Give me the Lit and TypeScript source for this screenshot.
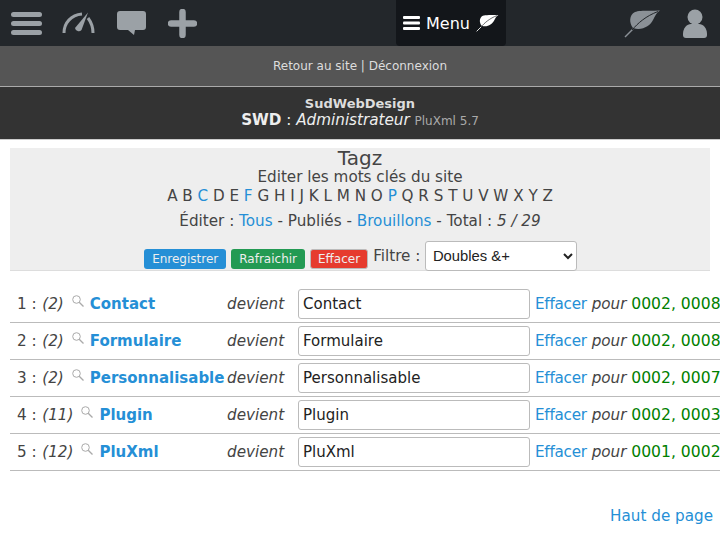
import { LitElement, html, css, svg } from "lit";
import { customElement } from "lit/decorators.js";

const leaf = (fill: string, vein: string) => svg`<path d="M1 28 L9 20" stroke="${fill}" stroke-width="1.4" fill="none"/><path d="M9 19 C5 14 5 6 11 3 C15 1 25 2 36 1.5 C33 3 31 7 29 11 C26 17 18 22 9 19Z" fill="${fill}"/><path d="M8 21 C14 14 22 7 34 2.5" stroke="${vein}" stroke-width="1" fill="none"/>`;

const rows = [
  { n: 1, c: 2, name: "Contact", ids: "0002, 0008" },
  { n: 2, c: 2, name: "Formulaire", ids: "0002, 0008" },
  { n: 3, c: 2, name: "Personnalisable", ids: "0002, 0007" },
  { n: 4, c: 11, name: "Plugin", ids: "0002, 0003" },
  { n: 5, c: 12, name: "PluXml", ids: "0001, 0002" },
];
const letters = "ABCDEFGHIJKLMNOPQRSTUVWXYZ".split("");
const linked = new Set(["C", "F", "P"]);

@customElement("app-root")
export class AppRoot extends LitElement {
  static styles = css`
    :host {
      display: block;
      width: 720px;
      height: 535px;
      overflow: hidden;
      position: relative;
      background: #fff;
      font-family: "DejaVu Sans", sans-serif;
      font-size: 15.2px;
      color: #444;
    }
    a { color: #258fd6; text-decoration: none; }
    .nav {
      height: 46px;
      background: #23272b;
      display: flex;
      align-items: stretch;
    }
    .nav-left { width: 396px; display: flex; align-items: center; }
    .nav-right { flex: 1; display: flex; align-items: center; justify-content: flex-end; }
    .nav svg { display: block; flex-shrink: 0; }
    .ic-bars { margin-left: 11px; }
    .ic-gauge { margin-left: 20px; }
    .ic-chat { margin-left: 22px; }
    .ic-plus { margin-left: 22px; }
    .menu {
      width: 110px;
      box-sizing: border-box;
      background: #13161a;
      border-radius: 0 0 4px 4px;
      display: flex;
      align-items: center;
      justify-content: center;
      gap: 6px;
      color: #fff;
      font-size: 16px;
    }
    .ic-leaf { margin-right: 22px; }
    .ic-user { margin-right: 13px; }
    .sub {
      height: 41px;
      box-sizing: border-box;
      background: #555;
      border-bottom: 1px solid #aaa;
      display: flex;
      align-items: center;
      justify-content: center;
      font-size: 12px;
      color: #ddd;
    }
    .brand {
      height: 53px;
      box-sizing: border-box;
      padding-bottom: 2px;
      background: #333;
      border-bottom: 1px solid #ccc;
      display: flex;
      flex-direction: column;
      align-items: center;
      justify-content: center;
      color: #eee;
      line-height: 17px;
    }
    .brand b.t { font-size: 13px; color: #ddd; }
    .brand small { font-size: 12px; color: #aaa; }
    .panel {
      margin: 8px 10px 0;
      height: 123px;
      background: #eee;
      border-bottom: 1px solid #ddd;
      text-align: center;
      box-sizing: border-box;
    }
    .title { font-size: 20px; line-height: 20px; color: #444; }
    .line { line-height: 19px; }
    .letters { display: flex; justify-content: center; gap: 4.8px; line-height: 19px; }
    .stats { line-height: 20px; margin-top: 5px; }
    .actions {
      margin-top: 10px;
      padding-left: 1px;
      display: flex;
      justify-content: center;
      align-items: center;
      height: 30px;
    }
    .btn {
      font-size: 12px;
      height: 20px;
      line-height: 20px;
      color: #eee;
      padding: 0 8px;
      border-radius: 3px;
      margin-right: 5px;
      box-sizing: border-box;
      margin-top: 6px;
    }
    .blue { background: #258fd6; }
    .green { background: #239a53; }
    .red { background: #e63b2e; border: 1px solid #bbb; line-height: 18px; padding: 0 7px; }
    .flt { margin: 0 4.5px 0 0; }
    select {
      width: 152px;
      height: 30px;
      font: 14.8px "Liberation Sans", sans-serif;
      border: 1px solid #bbb;
      border-radius: 3px;
      background: #fff;
      color: #222;
      padding: 0 3px;
    }
    .table { margin: 15px 0 0 10px; width: 720px; }
    .row {
      display: grid;
      grid-template-columns: 217px 71px 237px auto;
      height: 37px;
      align-items: center;
      border-bottom: 1px solid #bbb;
      box-sizing: border-box;
      white-space: nowrap;
    }
    .cell-a { padding-left: 7px; display: flex; align-items: center; }
    .count { font-style: italic; margin-left: 5.6px; }
    .mag { margin: -6px 6px 0 8px; display: block; flex-shrink: 0; }
    .name { font-weight: 700; color: #258fd6; font-size: 15px; }
    .dev { font-style: italic; }
    input {
      width: 232px;
      height: 30px;
      box-sizing: border-box;
      border: 1px solid #bbb;
      border-radius: 3px;
      padding: 0 4px;
      font: 15px "DejaVu Sans", sans-serif;
      color: #222;
      background: #fff;
      display: block;
    }
    .eff { letter-spacing: -0.25px; }
    .ids { color: #008000; font-size: 15.6px; }
    .top { display: flex; justify-content: flex-end; margin: 36px 7px 0 0; }
  `;

  render() {
    return html`
      <div class="nav">
        <div class="nav-left">
          <svg class="ic-bars" width="31" height="25" viewBox="0 0 31 25"><g fill="#9ba1a6"><rect y="1" width="31" height="5" rx="2.5"/><rect y="10" width="31" height="5" rx="2.5"/><rect y="19" width="31" height="5" rx="2.5"/></g></svg>
          <svg class="ic-gauge" width="33" height="22" viewBox="0 0 33 22"><path d="M2 21 C2 11 9 3 20 2" stroke="#9ba1a6" stroke-width="3" fill="none"/><path d="M26 6 C29 10 31 15 31 21" stroke="#9ba1a6" stroke-width="3" fill="none"/><path d="M26 0.5 L19.5 18 A3.8 3.8 0 0 1 13 16 Z" fill="#9ba1a6"/></svg>
          <svg class="ic-chat" width="29" height="25" viewBox="0 0 29 25"><path d="M3 0 H26 A3 3 0 0 1 29 3 V16 A3 3 0 0 1 26 19 H18 L17 24 L11 19 H3 A3 3 0 0 1 0 16 V3 A3 3 0 0 1 3 0Z" fill="#9ba1a6"/></svg>
          <svg class="ic-plus" width="29" height="29" viewBox="0 0 29 29"><path d="M14.5 3 V26 M3 14.5 H26" stroke="#9ba1a6" stroke-width="6.5" stroke-linecap="round"/></svg>
        </div>
        <div class="menu">
          <svg width="17" height="14" viewBox="0 0 17 14"><g fill="#fff"><rect y="0" width="17" height="3" rx="1"/><rect y="5.5" width="17" height="3" rx="1"/><rect y="11" width="17" height="3" rx="1"/></g></svg>
          <span>Menu</span>
          <svg width="23" height="18" viewBox="0 0 37 29">${leaf("#fff", "#13161a")}</svg>
        </div>
        <div class="nav-right">
          <svg class="ic-leaf" width="37" height="29" viewBox="0 0 37 29">${leaf("#8b9197", "#23272b")}</svg>
          <svg class="ic-user" width="24" height="29" viewBox="0 0 24 29"><circle cx="12" cy="8" r="7.5" fill="#9ba1a6"/><path d="M0 25 C0 19 4 15 8 15 H16 C20 15 24 19 24 25 V26 A3 3 0 0 1 21 29 H3 A3 3 0 0 1 0 26Z" fill="#9ba1a6"/></svg>
        </div>
      </div>
      <div class="sub"><span>Retour au site | Déconnexion</span></div>
      <div class="brand">
        <b class="t">SudWebDesign</b>
        <div class="l2"><b>SWD</b> : <i>Administrateur</i> <small>PluXml 5.7</small></div>
      </div>
      <div class="panel">
        <div class="title">Tagz</div>
        <div class="line">Editer les mots clés du site</div>
        <div class="letters">${letters.map((l) => linked.has(l) ? html`<a>${l}</a>` : html`<span>${l}</span>`)}</div>
        <div class="stats">Éditer : <a>Tous</a> - Publiés - <a>Brouillons</a> - Total : <i>5 / 29</i></div>
        <div class="actions">
          <span class="btn blue">Enregistrer</span>
          <span class="btn green">Rafraichir</span>
          <span class="btn red">Effacer</span>
          <span class="flt">Filtre :</span>
          <select><option>Doubles &amp;+</option></select>
        </div>
      </div>
      <div class="table">
        ${rows.map((r) => html`
          <div class="row">
            <div class="cell-a">
              <span>${r.n} :</span><span class="count">(${r.c})</span>
              <svg class="mag" width="12" height="12" viewBox="0 0 12 12"><circle cx="4.5" cy="4.5" r="3.8" stroke="#aaa" stroke-width="1" fill="none"/><path d="M7.2 7.2 L11.5 11.5" stroke="#aaa" stroke-width="1.3"/></svg>
              <span class="name">${r.name}</span>
            </div>
            <div class="dev">devient</div>
            <div><input .value=${r.name} /></div>
            <div><a class="eff">Effacer</a> <i>pour</i> <span class="ids">${r.ids}</span></div>
          </div>
        `)}
      </div>
      <div class="top"><a>Haut de page</a></div>
    `;
  }
}
